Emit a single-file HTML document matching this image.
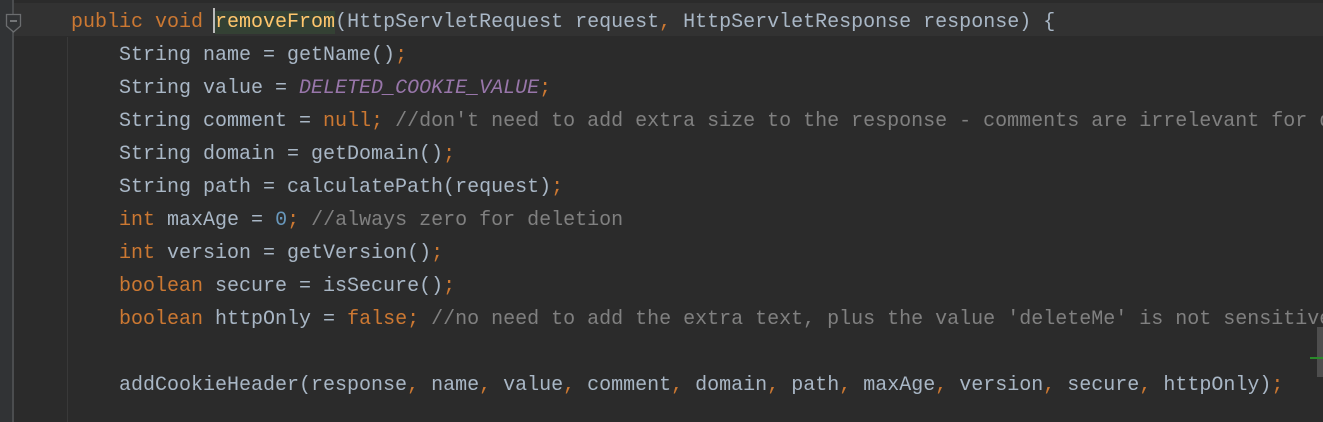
<!DOCTYPE html>
<html><head><meta charset="utf-8"><style>
html,body{margin:0;padding:0;}
body{width:1323px;height:422px;background:#2b2b2b;position:relative;overflow:hidden;font-family:"Liberation Mono",monospace;font-size:20px;}
.gut{position:absolute;left:0;top:0;width:12px;height:422px;background:#313335;}
.gl{position:absolute;left:12px;top:0;width:2px;height:422px;background:#4b4d4f;}
.cur{position:absolute;left:14px;top:3px;width:1309px;height:33px;background:#323232;}
.ig{position:absolute;left:67px;top:37px;width:1px;height:385px;background:#393939;}
.code{position:absolute;left:71px;top:6px;width:1252px;overflow:hidden;white-space:pre;line-height:33px;color:#a9b7c6;}
.k{color:#cc7832}.c{color:#808080}.p{color:#9876aa;font-style:italic}.n{color:#6897bb}
.m{color:#ffc66d;background:#344134}
.caret{position:absolute;left:213px;top:8px;width:2px;height:25px;background:#bbbbbb;}
.sb{position:absolute;left:1317px;top:327px;width:6px;height:50px;background:#4e4e4e;}
.gm{position:absolute;left:1310px;top:357px;width:13px;height:2px;background:#2a8a2a;}
</style></head><body>
<div class="gut"></div><div class="gl"></div><div class="cur"></div><div class="ig"></div>
<svg style="position:absolute;left:5px;top:13px" width="18" height="21"><path d="M1.5 1.5H15.5V13L8.5 19L1.5 13Z" fill="#313335" stroke="#6b6d6f" stroke-width="1.3"/><path d="M5 8H12" stroke="#8b8d8f" stroke-width="1.5"/></svg>
<div class="code"><span class="k">public void </span><span class="m">removeFrom</span>(HttpServletRequest request<span class="k">, </span>HttpServletResponse response) {
    String name = getName()<span class="k">;</span>
    String value = <span class="p">DELETED_COOKIE_VALUE</span><span class="k">;</span>
    String comment = <span class="k">null;</span> <span class="c">//don't need to add extra size to the response - comments are irrelevant for deletions</span>
    String domain = getDomain()<span class="k">;</span>
    String path = calculatePath(request)<span class="k">;</span>
    <span class="k">int </span>maxAge = <span class="n">0</span><span class="k">;</span> <span class="c">//always zero for deletion</span>
    <span class="k">int </span>version = getVersion()<span class="k">;</span>
    <span class="k">boolean </span>secure = isSecure()<span class="k">;</span>
    <span class="k">boolean </span>httpOnly = <span class="k">false;</span> <span class="c">//no need to add the extra text, plus the value 'deleteMe' is not sensitive</span>

    addCookieHeader(response<span class="k">, </span>name<span class="k">, </span>value<span class="k">, </span>comment<span class="k">, </span>domain<span class="k">, </span>path<span class="k">, </span>maxAge<span class="k">, </span>version<span class="k">, </span>secure<span class="k">, </span>httpOnly)<span class="k">;</span></div>
<div class="caret"></div>
<div class="sb"></div><div class="gm"></div>
</body></html>
